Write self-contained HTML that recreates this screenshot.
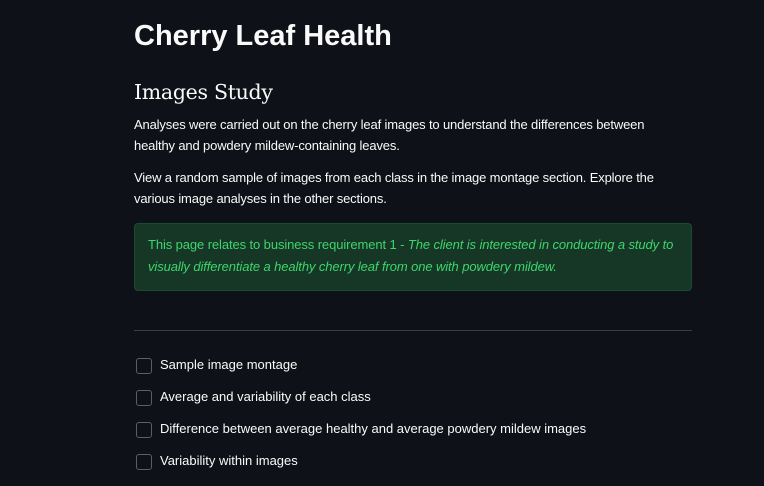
<!DOCTYPE html>
<html><head><meta charset="utf-8"><style>
html,body{margin:0;padding:0;background:#0e1117;width:764px;height:486px;overflow:hidden;color:#fafafa;font-family:"Liberation Sans",sans-serif;}
.c{position:absolute;left:134px;width:535px;}
h1{position:absolute;left:134px;top:20px;margin:0;font-size:29px;font-weight:bold;letter-spacing:0px;}
h2{position:absolute;left:134px;top:80px;margin:0;font-family:"DejaVu Serif","Liberation Serif",serif;font-weight:normal;font-size:20.5px;letter-spacing:-0.3px;}
p{margin:0;font-size:13px;line-height:21px;letter-spacing:-0.15px;}
.al{position:absolute;left:134px;top:223px;width:527px;height:45px;padding:10px 16px 11px 13px;background:#173726;border:1px solid #1c4a2f;border-radius:4px;color:#3dd56d;font-size:13px;line-height:22px;letter-spacing:-0.1px;}
.hr{position:absolute;left:134px;top:330px;width:558px;height:1px;background:#3a3d45;}
.cb{position:absolute;left:136px;font-size:13px;}
.cb span{position:absolute;left:0;top:0;width:14px;height:14px;border:1px solid #5a5e68;border-radius:3px;}
.cb b{position:absolute;left:24px;top:-1px;font-weight:normal;white-space:nowrap;}
</style></head><body>
<h1>Cherry Leaf Health</h1>
<h2>Images Study</h2>
<div class="c" style="top:114px"><p>Analyses were carried out on the cherry leaf images to understand the differences between healthy and powdery mildew-containing leaves.</p></div>
<div class="c" style="top:167px"><p>View a random sample of images from each class in the image montage section. Explore the various image analyses in the other sections.</p></div>
<div class="al">This page relates to business requirement 1 - <i>The client is interested in conducting a study to visually differentiate a healthy cherry leaf from one with powdery mildew.</i></div>
<div class="hr"></div>
<div class="cb" style="top:358px"><span></span><b>Sample image montage</b></div>
<div class="cb" style="top:390px"><span></span><b>Average and variability of each class</b></div>
<div class="cb" style="top:422px"><span></span><b>Difference between average healthy and average powdery mildew images</b></div>
<div class="cb" style="top:454px"><span></span><b>Variability within images</b></div>
</body></html>
